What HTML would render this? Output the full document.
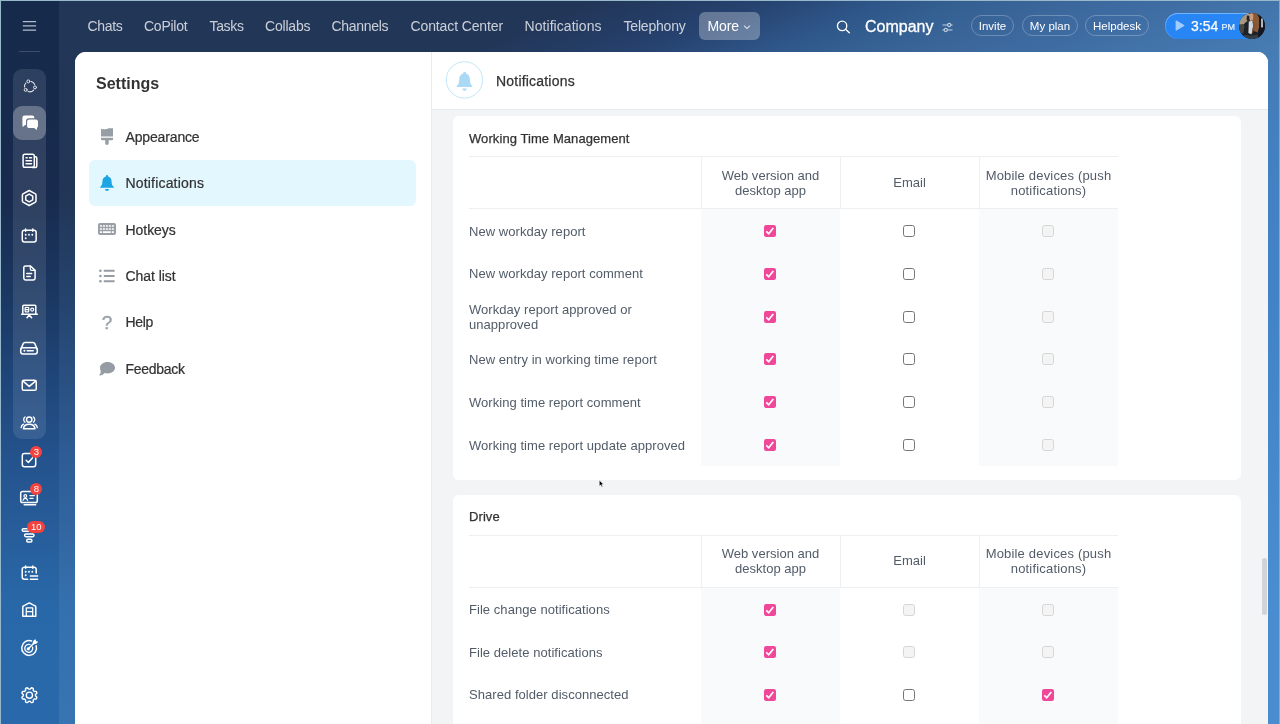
<!DOCTYPE html>
<html lang="en">
<head>
<meta charset="utf-8">
<title>Settings - Notifications</title>
<style>
*{box-sizing:border-box;margin:0;padding:0}
html,body{width:1280px;height:724px;overflow:hidden}
body{font-family:"Liberation Sans",sans-serif;position:relative;background:#2a62a2;color:#333}
.abs{position:absolute}
#bg{left:59px;top:0;width:1221px;height:724px;background:
 linear-gradient(180deg,#223658 0%,#213656 27%,#24446e 42%,#2a5082 52.500%,#2e5c94 63%,#3570ae 83.500%,#3874b2 100%)}
#bgr{left:59px;top:0;width:1221px;height:52px;background:linear-gradient(157.400deg,#223658 0%,#223658 40%,#26426f 52.500%,#2e5587 61%,#345f91 67%,#3a6599 73.300%,#3e6ca2 81.800%,#477db4 99.600%)}
#rail{left:0;top:0;width:59px;height:724px;background:
 linear-gradient(180deg,#162a4c 0%,#182b4e 27%,#1b3964 42%,#1f467a 52.500%,#24528c 63%,#2968a8 83.500%,#2968aa 100%)}
#edgeL{left:0;top:0;width:1px;height:724px;background:#98b8cc}
#edgeT{left:0;top:0;width:1280px;height:1px;background:#98b8cc}
#rstrip{left:1250px;top:52px;width:30px;height:672px;background:linear-gradient(180deg,#467cb4 0%,#4280c0 13%,#4283c8 36%,#4a8cd0 80%,#4a8cd0 100%)}
/* top nav */
.nav{top:17px;font-size:14px;line-height:18px;color:rgba(255,255,255,.76);white-space:nowrap}
#more{left:699px;top:12px;width:61px;height:28px;border-radius:6px;background:rgba(255,255,255,.29)}
.pill{top:15px;height:21px;border:1px solid rgba(255,255,255,.25);border-radius:11px;color:#fff;font-size:11.500px;line-height:20px;text-align:center;white-space:nowrap}
/* panel */
#panel{left:75px;top:52px;width:1193px;height:672px;background:#fff;border-radius:11px 11px 0 0;overflow:hidden;will-change:transform}
#side{left:0;top:0;width:357px;height:672px;background:#fff;border-right:1px solid #e9ecef;z-index:2}
#main{left:356px;top:0;width:837px;height:672px;background:#f2f4f6}
#mhead{left:0;top:0;width:837px;height:58px;background:#fff;border-bottom:1px solid #e6e9ec}
.mi{left:14px;width:327px;height:46px;border-radius:6px}
.mi span{position:absolute;left:36.500px;top:14px;font-size:14px;line-height:18px;color:#333;white-space:nowrap}
.card{left:22px;width:788px;background:#fff;border-radius:6px}
#mtitle{font-size:14px;line-height:18px;color:#333;white-space:nowrap;-webkit-text-stroke:.25px #333;letter-spacing:.2px}
.ctitle{font-size:13px;line-height:18px;color:#333;white-space:nowrap;-webkit-text-stroke:.25px #333;letter-spacing:.08px;margin-top:.6px}
.ln{background:#edeff1}
.th{font-size:13px;line-height:15px;color:#525c69;text-align:center;white-space:nowrap;letter-spacing:.02px;margin-top:0px}
.td{font-size:13px;line-height:15px;color:#525c69;white-space:nowrap;margin-top:.6px;letter-spacing:.05px}
.cbo{width:12px;height:12px;border:1px solid #767676;border-radius:2.500px;background:#fff}
.cbd{width:12px;height:12px;border:1px solid #d9d9d9;border-radius:2.500px;background:#f3f3f3}
.mi span{-webkit-text-stroke:.22px #333;letter-spacing:.05px}
.bdg{height:12px;border-radius:6px;background:#f4433e;color:#fff;font-size:9.500px;line-height:12px;text-align:center}
</style>
</head>
<body>
<div id="bg" class="abs"></div>
<div id="bgr" class="abs"></div>
<div id="rail" class="abs"></div>
<div id="rstrip" class="abs"></div>
<div id="edgeT" class="abs"></div>
<div id="edgeL" class="abs"></div>
<div class="abs" style="left:1279px;top:0;width:1px;height:724px;background:#7fabcf"></div>

<div id="top" class="abs" style="left:0;top:0;width:1280px;height:724px;will-change:transform">
<!-- TOPNAV -->
<div class="abs nav" style="left:87.500px;letter-spacing:-.3px">Chats</div>
<div class="abs nav" style="left:144px;letter-spacing:-.25px">CoPilot</div>
<div class="abs nav" style="left:209.500px;letter-spacing:-.35px">Tasks</div>
<div class="abs nav" style="left:265px;letter-spacing:-.2px">Collabs</div>
<div class="abs nav" style="left:331.500px;letter-spacing:-.3px">Channels</div>
<div class="abs nav" style="left:410.500px;letter-spacing:-.12px">Contact Center</div>
<div class="abs nav" style="left:524.500px;letter-spacing:.06px">Notifications</div>
<div class="abs nav" style="left:623.500px;letter-spacing:-.2px">Telephony</div>
<div id="more" class="abs"></div>
<div class="abs nav" style="left:707.500px;color:#fff;letter-spacing:-.1px">More</div>
<svg class="abs" style="left:743px;top:23px" width="8" height="8" viewBox="0 0 8 8"><path d="M1 2.600 4 5.400 7 2.600" fill="none" stroke="rgba(255,255,255,.75)" stroke-width="1.100"/></svg>
<svg class="abs" style="left:835.500px;top:19.500px" width="15" height="14" viewBox="0 0 16 15"><circle cx="6.500" cy="6.300" r="5" fill="none" stroke="#fff" stroke-width="1.400"/><path d="M10.200 10l4 3.700" stroke="#fff" stroke-width="1.500" stroke-linecap="round"/></svg>
<div class="abs" id="company" style="left:865px;top:16px;font-size:16px;line-height:22px;color:#fff;white-space:nowrap;-webkit-text-stroke:.3px #fff">Company</div>
<svg class="abs" style="left:942px;top:22px" width="11" height="11" viewBox="0 0 11 11"><g stroke="rgba(255,255,255,.7)" stroke-width="1.100" fill="none"><path d="M.5 3h4.800M9 3h1.500M.5 8h1.500M5.700 8h4.800"/><circle cx="7.200" cy="3" r="1.600"/><circle cx="3.800" cy="8" r="1.600"/></g></svg>
<div class="abs pill" style="left:971px;width:43px">Invite</div>
<div class="abs pill" style="left:1022px;width:56px">My plan</div>
<div class="abs pill" style="left:1085px;width:64px">Helpdesk</div>
<div class="abs" style="left:1164.500px;top:13px;width:88px;height:25.500px;border-radius:13px 0 0 13px;background:#2786f4;box-shadow:inset 0 1px 0 rgba(120,185,255,.9), inset 1px 0 0 rgba(120,185,255,.4)"></div>
<svg class="abs" style="left:1175px;top:20.300px" width="10" height="11" viewBox="0 0 10 11"><path d="M1.200 1 8.800 5.500 1.200 10z" fill="#a3cdff" stroke="#a3cdff" stroke-width="1.200" stroke-linejoin="round"/></svg>
<div class="abs" id="clock" style="left:1191px;top:16px;font-size:14px;line-height:20px;color:#fff;white-space:nowrap;-webkit-text-stroke:.25px #fff">3:54</div><div class="abs" id="pm" style="left:1221.500px;top:19px;-webkit-text-stroke:.2px rgba(255,255,255,.85);font-size:9px;line-height:16px;color:rgba(255,255,255,.85);white-space:nowrap">PM</div>
<svg class="abs" style="left:1239px;top:12.700px" width="26" height="26" viewBox="0 0 26 26"><defs><clipPath id="av"><circle cx="13" cy="13" r="13"/></clipPath><filter id="avb" x="-10%" y="-10%" width="120%" height="120%"><feGaussianBlur stdDeviation=".55"/></filter></defs><g clip-path="url(#av)"><rect width="26" height="26" fill="#1a2028"/><g filter="url(#avb)"><rect width="26" height="26" fill="#1a2028"/><path d="M0 0h10v7.500l-3 1.500-3.500 3.500H0z" fill="#a89a82"/><path d="M0 11.500l3.800-.5 1.800 2-1.400 8-4.200-2z" fill="#4a4640"/><path d="M12.500 0h5l2.700 5 .3 8-2 6.500-3.500-1.500-1.300-9-2.200-4z" fill="#8a5a35"/><path d="M9.800 1.500c1-1.800 3.800-1.500 4.500.5l-.2 4.500-2.400 1.800-2.100-2.300z" fill="#c89c82"/><path d="M8 2.500l2.300.3.300 4.500-1.800 1.200-1.300-2z" fill="#2a2320"/><path d="M9.800 8.500l3.600-.7.800 5.200-1.600 8.500-3.200-1.500z" fill="#d4d7dc"/><path d="M14 7.500c1.800 2 2.200 6.500 1.200 9.500l-2.600 4.500 1.600-8.500z" fill="#7d5030"/><path d="M20.500 2.500h5.500v23.500h-7l1-9z" fill="#121820"/><path d="M22.100 5.500h1.700l.2 8.700-1.900.3z" fill="#c5c9cf"/><path d="M5 21.500l7 1.200 7-1.200v4.500H5z" fill="#363c44"/></g></g></svg>

<svg class="abs" style="left:20px;top:16px" width="20" height="20" viewBox="0 0 20 20"><path d="M2.800 5.600h13.300M2.800 9.900h13.300M2.800 14.100h13.300" stroke="#b4bccb" stroke-width="1.400" fill="none"/></svg><div class="abs" style="left:19px;top:51px;width:21px;height:1px;background:rgba(255,255,255,.16)"></div>
<div class="abs" style="left:12.500px;top:68.500px;width:33.500px;height:370.500px;border-radius:9px;background:rgba(255,255,255,.10)"></div>
<div class="abs" style="left:12.500px;top:106px;width:33.500px;height:34px;border-radius:9px;background:rgba(255,255,255,.27)"></div>
<svg class="abs" style="left:17px;top:74px" width="24" height="24" viewBox="0 0 24 24"><g stroke="#fff" fill="none" stroke-linecap="round" opacity=".88"><path stroke-width="1.050" d="M14.35 7.43A5.3 5.3 0 0 1 17.68 10.43M16.68 16.11A5.3 5.3 0 0 1 11.16 17.54M7.53 13.05A5.3 5.3 0 0 1 8.80 9.02"/><circle cx="11.34" cy="7.41" r="1.500" stroke-width="1"/><circle cx="18.02" cy="13.42" r="1.500" stroke-width="1"/><circle cx="8.68" cy="15.84" r="1.500" stroke-width="1"/></g></svg>
<svg class="abs" style="left:17.600px;top:111px" width="24" height="24" viewBox="0 0 24 24"><path fill="#fff" d="M6.600 4.600h7.600a2.200 2.200 0 0 1 2.200 2.200v.5h-5.200a3.200 3.200 0 0 0-3.200 3.200v3.500h-.9l-2 1.700c-.3.200-.6 0-.6-.3v-1.700a2.200 2.200 0 0 1-.1-.7v-6.200a2.200 2.200 0 0 1 2.200-2.200z"/><path fill="#fff" d="M11.300 8.500h6.500a2.200 2.200 0 0 1 2.200 2.200v4.200a2.200 2.200 0 0 1-1 1.850v1.700c0 .3-.35.500-.6.300l-2.300-1.650h-4.800a2.200 2.200 0 0 1-2.200-2.200v-4.200a2.200 2.200 0 0 1 2.200-2.200z"/></svg>
<svg class="abs" style="left:17px;top:148.5px" width="24" height="24" viewBox="0 0 24 24"><g stroke="#fff" stroke-width="1.500" fill="none" stroke-linecap="round" stroke-linejoin="round"><rect x="6.100" y="5.250" width="11.200" height="13.100" rx="1.800"/><path d="M17.600 7.700h.7a1.500 1.500 0 0 1 1.500 1.500v7.700a1.500 1.500 0 0 1-1.500 1.500h-3"/><path d="M9 8.700h1.200M12.500 8.700h2M9 11.700h5.500M9 14.700h5.500" stroke-width="1.400"/></g></svg>
<svg class="abs" style="left:17px;top:186px" width="24" height="24" viewBox="0 0 24 24"><g stroke="#fff" stroke-width="1.500" fill="none" stroke-linecap="round" stroke-linejoin="round"><path d="M12.200 4.500l6.200 3.400a1.200 1.200 0 0 1 .6 1v6.200a1.200 1.200 0 0 1-.6 1l-6.200 3.400-6.200-3.400a1.200 1.200 0 0 1-.6-1V8.900a1.200 1.200 0 0 1 .6-1z"/><path d="M12.200 8.100l3.500 2v3.800l-3.500 2-3.500-2v-3.800z"/></g></svg>
<svg class="abs" style="left:17px;top:223.5px" width="24" height="24" viewBox="0 0 24 24"><g stroke="#fff" stroke-width="1.500" fill="none" stroke-linecap="round" stroke-linejoin="round"><rect x="5.250" y="6.200" width="13.900" height="11.700" rx="2.200"/><path d="M8.600 5v2.200M15.800 5v2.200"/><path stroke-width="1.900" d="M8.700 10.800h.01M12 10.800h.01M15.300 10.800h.01M8.700 14.200h.01"/></g></svg>
<svg class="abs" style="left:17px;top:261px" width="24" height="24" viewBox="0 0 24 24"><g stroke="#fff" stroke-width="1.500" fill="none" stroke-linecap="round" stroke-linejoin="round"><path d="M8.600 5h4.900l4.600 4.400v7.700a1.800 1.800 0 0 1-1.800 1.800H8.600a1.800 1.800 0 0 1-1.800-1.800V6.800a1.800 1.800 0 0 1 1.800-1.800z"/><path d="M13.300 5.200v2.900a1.300 1.300 0 0 0 1.300 1.300h3.200" stroke-width="1.200"/><path d="M9.800 12.600h4.800M9.800 15.500h3.400"/></g></svg>
<svg class="abs" style="left:17px;top:298.5px" width="24" height="24" viewBox="0 0 24 24"><g stroke="#fff" stroke-width="1.500" fill="none" stroke-linecap="round" stroke-linejoin="round"><path d="M5.800 15V7.300a1 1 0 0 1 1-1h11a1 1 0 0 1 1 1V15"/><path d="M4.700 15.300h15.600"/><path d="M10 18.700l2.300-2.700 2.300 2.700"/><rect x="8.200" y="8.300" width="3.500" height="4.600" rx=".5" stroke-width="1.200"/><path d="M8.200 10.600h3.500" stroke-width="1.200"/><circle cx="15.200" cy="10.600" r="1.500" stroke-width="1.200"/></g></svg>
<svg class="abs" style="left:17px;top:336px" width="24" height="24" viewBox="0 0 24 24"><g stroke="#fff" stroke-width="1.500" fill="none" stroke-linecap="round" stroke-linejoin="round"><path d="M3.800 13.200l2.400-5.600a2 2 0 0 1 1.800-1.200h8a2 2 0 0 1 1.800 1.200l2.400 5.600"/><rect x="3.700" y="11.700" width="16.600" height="6.200" rx="2.200"/><path d="M7.400 14.800h.01" stroke-width="2"/><path d="M10.200 14.800h6"/></g></svg>
<svg class="abs" style="left:17px;top:373px" width="24" height="24" viewBox="0 0 24 24"><g stroke="#fff" stroke-width="1.500" fill="none" stroke-linecap="round" stroke-linejoin="round"><rect x="5.250" y="7.150" width="14" height="10.100" rx="1.600"/><path d="M6 8.200l6.250 5.200 6.250-5.200"/></g></svg>
<svg class="abs" style="left:17px;top:410.5px" width="24" height="24" viewBox="0 0 24 24"><g stroke="#fff" stroke-width="1.500" fill="none" stroke-linecap="round" stroke-linejoin="round"><circle cx="12.200" cy="8.600" r="2.700"/><path d="M6.400 17.800c.3-2.900 2.600-4.500 5.800-4.500s5.500 1.600 5.800 4.500z"/><path d="M8 6a3.200 3.200 0 0 0 0 5.200M16.400 6a3.200 3.200 0 0 1 0 5.200" stroke-width="1.300"/><path d="M4.100 16.700c.2-1.600 1-2.800 2.500-3.500M20.300 16.700c-.2-1.600-1-2.800-2.500-3.500" stroke-width="1.300"/></g></svg>
<svg class="abs" style="left:17px;top:448px" width="24" height="24" viewBox="0 0 24 24"><g stroke="#fff" stroke-width="1.500" fill="none" stroke-linecap="round" stroke-linejoin="round"><rect x="5.300" y="5.400" width="13.400" height="13.400" rx="2.200"/><path d="M9.200 12.300l2.200 2.200 4-4.600"/></g></svg>
<svg class="abs" style="left:17px;top:485.5px" width="24" height="24" viewBox="0 0 24 24"><g stroke="#fff" stroke-width="1.500" fill="none" stroke-linecap="round" stroke-linejoin="round"><rect x="3.700" y="5.600" width="16.600" height="11" rx="1.800"/><path d="M7.200 18.700h11.400"/><circle cx="8.300" cy="10" r="1.400" stroke-width="1.200"/><path d="M6 14.300c.3-1.400 1.200-2 2.300-2s2 .6 2.300 2" stroke-width="1.200"/><path d="M13 9.600h4.300M13 12.400h3" stroke-width="1.300"/></g></svg>
<svg class="abs" style="left:17px;top:523px" width="24" height="24" viewBox="0 0 24 24"><g stroke="#fff" stroke-width="1.500" fill="none" stroke-linecap="round" stroke-linejoin="round"><rect x="5.200" y="5.750" width="14" height="2.600" rx="1.300"/><rect x="7.600" y="11.050" width="9.400" height="2.600" rx="1.300"/><rect x="9.700" y="16.350" width="5.200" height="2.600" rx="1.300"/></g></svg>
<svg class="abs" style="left:17px;top:560.5px" width="24" height="24" viewBox="0 0 24 24"><g stroke="#fff" stroke-width="1.500" fill="none" stroke-linecap="round" stroke-linejoin="round"><path d="M10.600 18.200H7.400a2.200 2.200 0 0 1-2.200-2.200V8.400a2.200 2.200 0 0 1 2.200-2.200h9.600a2.200 2.200 0 0 1 2.200 2.200v3.600"/><path d="M8.600 5v2.200M15.800 5v2.200"/><path stroke-width="1.900" d="M8.700 10.800h.01M12 10.800h.01M15.300 10.800h.01M8.700 14.200h.01"/><path d="M13.400 15.100h7.200M13.400 18.200h7.200"/></g></svg>
<svg class="abs" style="left:17px;top:598px" width="24" height="24" viewBox="0 0 24 24"><g stroke="#fff" stroke-width="1.500" fill="none" stroke-linecap="round" stroke-linejoin="round"><path d="M5.800 18.200V9.200a1.500 1.500 0 0 1 .9-1.400l5-2.600a1.400 1.400 0 0 1 1.200 0l5 2.600a1.500 1.500 0 0 1 .9 1.400v9z"/><path d="M9.300 18v-8.200h6.400V18M9.300 13.600h6.400" stroke-width="1.300"/></g></svg>
<svg class="abs" style="left:17px;top:635.5px" width="24" height="24" viewBox="0 0 24 24"><g stroke="#fff" stroke-width="1.500" fill="none" stroke-linecap="round" stroke-linejoin="round"><path d="M14.600 5a7.400 7.400 0 1 0 4.600 4.800"/><path d="M13 8.500a4 4 0 1 0 2.600 2.700" stroke-width="1.300"/><path d="M11.300 12.800l5.600-5.600"/><path d="M16.200 7.700l.4-2.300 1.600-1.600.3 1.800 1.800.3-1.600 1.600z" stroke-width="1.100" fill="#fff"/><circle cx="11.300" cy="12.800" r=".9" fill="#fff"/></g></svg>
<svg class="abs" style="left:17px;top:682.5px" width="24" height="24" viewBox="0 0 24 24"><g stroke="#fff" stroke-width="1.500" fill="none" stroke-linecap="round" stroke-linejoin="round"><path d="M18.50 12.20 18.49 12.60 18.53 13.01 19.22 13.56 19.85 14.20 19.79 14.71 19.61 15.18 19.40 15.65 19.08 16.06 18.18 16.06 17.31 15.97 16.99 16.22 16.71 16.51 16.42 16.79 16.17 17.11 16.26 17.98 16.26 18.88 15.85 19.20 15.38 19.41 14.91 19.59 14.40 19.65 13.76 19.02 13.21 18.33 12.80 18.29 12.40 18.30 12.00 18.29 11.59 18.33 11.04 19.02 10.40 19.65 9.89 19.59 9.42 19.41 8.95 19.20 8.54 18.88 8.54 17.98 8.63 17.11 8.38 16.79 8.09 16.51 7.81 16.22 7.49 15.97 6.62 16.06 5.72 16.06 5.40 15.65 5.19 15.18 5.01 14.71 4.95 14.20 5.58 13.56 6.27 13.01 6.31 12.60 6.30 12.20 6.31 11.80 6.27 11.39 5.58 10.84 4.95 10.20 5.01 9.69 5.19 9.22 5.40 8.75 5.72 8.34 6.62 8.34 7.49 8.43 7.81 8.18 8.09 7.89 8.38 7.61 8.63 7.29 8.54 6.42 8.54 5.52 8.95 5.20 9.42 4.99 9.89 4.81 10.40 4.75 11.04 5.38 11.59 6.07 12.00 6.11 12.40 6.10 12.80 6.11 13.21 6.07 13.76 5.38 14.40 4.75 14.91 4.81 15.38 4.99 15.85 5.20 16.26 5.52 16.26 6.42 16.17 7.29 16.42 7.61 16.71 7.89 16.99 8.18 17.31 8.43 18.18 8.34 19.08 8.34 19.40 8.75 19.61 9.22 19.79 9.69 19.85 10.20 19.22 10.84 18.53 11.39 18.49 11.80z" stroke-width="1.400"/><circle cx="12.4" cy="12.2" r="3.100" stroke-width="1.400"/></g></svg>
<div class="abs bdg" style="left:30.299999999999997px;top:446px;width:12px">3</div>
<div class="abs bdg" style="left:30.299999999999997px;top:483.3px;width:12px">8</div>
<div class="abs bdg" style="left:27.299999999999997px;top:521px;width:18px">10</div>

</div>
<!-- PANEL -->
<div id="panel" class="abs">
 <div id="side" class="abs">
<div class="abs" id="stitle" style="left:21px;top:22px;font-size:16px;line-height:20px;font-weight:bold;color:#333">Settings</div>
  <div class="abs mi" style="top:62px"><svg class="abs" style="left:12px;top:14px" width="12" height="17" viewBox="0 0 12 17"><path fill="#979ea6" d="M0 .9h1.300l.5.800.5-.8h1l.5.800.5-.8h2.200l.6-.7H12v8.400H0z M0 9.700h12v1.600c0 .6-.4.900-1 .9H7.700v3a1.750 1.750 0 0 1-3.500 0v-3H1c-.6 0-1-.3-1-.9z"/></svg><span style="letter-spacing:-0.15px">Appearance</span></div>
  <div class="abs mi" style="top:108px;background:#e2f7fe"><svg class="abs" style="left:11px;top:15px" width="14" height="16" viewBox="0 0 14 16"><path fill="#1ba5e3" d="M7 0a1.100 1.100 0 0 1 1.100 1.100v.5c2.200.6 3.500 2.500 3.500 4.900 0 2.700.6 4.100 2 5.200.5.400.3 1.100-.3 1.100H.700c-.6 0-.8-.7-.3-1.100 1.400-1.100 2-2.500 2-5.200 0-2.400 1.300-4.300 3.500-4.900v-.5A1.100 1.100 0 0 1 7 0z M5 14h4a2 2 0 0 1-4 0z"/></svg><span style="letter-spacing:0.18px">Notifications</span></div>
  <div class="abs mi" style="top:154.500px"><svg class="abs" style="left:9px;top:16.400px" width="18" height="12" viewBox="0 0 18 12"><rect width="18" height="12" rx="2" fill="#989fa7"/><g fill="#fff"><rect x="1.85" y="2.20" width="2.100" height="1.600" rx=".3"/><rect x="4.85" y="2.20" width="2.100" height="1.600" rx=".3"/><rect x="7.80" y="2.20" width="2.100" height="1.600" rx=".3"/><rect x="10.75" y="2.20" width="2.100" height="1.600" rx=".3"/><rect x="13.80" y="2.20" width="2.100" height="1.600" rx=".3"/><rect x="1.85" y="5.25" width="2.100" height="1.600" rx=".3"/><rect x="4.85" y="5.25" width="2.100" height="1.600" rx=".3"/><rect x="7.80" y="5.25" width="2.100" height="1.600" rx=".3"/><rect x="10.75" y="5.25" width="2.100" height="1.600" rx=".3"/><rect x="13.80" y="5.25" width="2.100" height="1.600" rx=".3"/><rect x="1.85" y="8.30" width="2.100" height="1.600" rx=".3"/><rect x="13.80" y="8.30" width="2.100" height="1.600" rx=".3"/><rect x="4.85" y="8.30" width="8.00" height="1.600" rx=".3"/></g></svg><span style="letter-spacing:-0.05px">Hotkeys</span></div>
  <div class="abs mi" style="top:201px"><svg class="abs" style="left:10px;top:16px" width="16" height="14" viewBox="0 0 16 14"><g fill="#959ca4"><circle cx="1.400" cy="1.800" r="1.300"/><circle cx="1.400" cy="7" r="1.300"/><circle cx="1.400" cy="12.200" r="1.300"/><rect x="4.600" y=".85" width="11.200" height="1.900" rx=".95"/><rect x="4.600" y="6.050" width="11.200" height="1.900" rx=".95"/><rect x="4.600" y="11.250" width="11.200" height="1.900" rx=".95"/></g></svg><span style="letter-spacing:-0.06px">Chat list</span></div>
  <div class="abs mi" style="top:247px"><div class="abs" style="left:12px;top:12px;width:12px;text-align:center;font-size:19px;line-height:24px;color:#9aa0a7;-webkit-text-stroke:.35px #9aa0a7">?</div><span style="letter-spacing:-0.3px">Help</span></div>
  <div class="abs mi" style="top:293.500px"><svg class="abs" style="left:10px;top:16px" width="16" height="14" viewBox="0 0 16 14"><path fill="#959ca4" d="M8.500 0C12.600 0 16 2.500 16 5.700s-3.400 5.700-7.500 5.700c-1.100 0-2.100-.2-3-.5-.9 1.200-2.600 2.300-4.700 2.700-.4.100-.6-.3-.4-.6.800-1.100 1.300-2.400 1.400-3.700C1.300 8.300 1 7 1 5.700 1 2.500 4.400 0 8.500 0z"/></svg><span style="letter-spacing:-0.29px">Feedback</span></div>
 </div>
 <div id="main" class="abs">
  <div id="mhead" class="abs"></div>
<svg class="abs" style="left:0;top:0" width="70" height="57" viewBox="0 0 70 57"><circle cx="33.400" cy="27.900" r="18.200" fill="#fff" stroke="#c3e6f8" stroke-width="1"/><path transform="translate(25.900,19.700) scale(1.280,1.330)" fill="#a9d9f5" d="M6 0a1 1 0 0 1 1 1v.4c2 .5 3.200 2.300 3.200 4.500 0 2.400.5 3.700 1.700 4.700.4.300.2.900-.3.900H.400c-.5 0-.7-.6-.3-.9 1.200-1 1.700-2.300 1.700-4.700 0-2.200 1.200-4 3.200-4.500V1a1 1 0 0 1 1-1z M4.300 12.600h3.400a1.700 1.700 0 0 1-3.400 0z"/></svg>
<div class="abs" id="mtitle" style="left:65px;top:20px">Notifications</div>
<div class="abs card" style="top:64px;height:364px">
<div class="abs ctitle" style="left:16px;top:13px">Working Time Management</div>
<div class="abs" style="left:248px;top:93px;width:139px;height:257px;background:#f8fafb"></div>
<div class="abs" style="left:526px;top:93px;width:139px;height:257px;background:#f8fafb"></div>
<div class="abs ln" style="left:16px;top:40px;width:649px;height:1px"></div>
<div class="abs ln" style="left:16px;top:92px;width:649px;height:1px"></div>
<div class="abs ln" style="left:248px;top:41px;width:1px;height:51px"></div>
<div class="abs ln" style="left:387px;top:41px;width:1px;height:51px"></div>
<div class="abs ln" style="left:526px;top:41px;width:1px;height:51px"></div>
<div class="abs th" style="left:248px;top:52px;width:139px">Web version and<br>desktop app</div>
<div class="abs th" style="left:387px;top:59px;width:139px">Email</div>
<div class="abs th" style="left:526px;top:52px;width:139px;letter-spacing:.18px">Mobile devices (push<br>notifications)</div>
<div class="abs td" style="left:16px;top:107.00px">New workday report</div>
<svg class="abs" style="left:311px;top:108.9px" width="12" height="12" viewBox="0 0 12 12"><rect width="12" height="12" rx="2.200" fill="#f0479b"/><path d="M2.300 6.400 4.700 8.800 9.300 2.900" fill="none" stroke="#fff" stroke-width="1.700"/></svg>
<svg class="abs" style="left:450px;top:108.9px" width="12" height="12" viewBox="0 0 12 12"><rect x=".5" y=".5" width="11" height="11" rx="2.200" fill="#fff" stroke="#767676"/></svg>
<svg class="abs" style="left:589px;top:108.9px" width="12" height="12" viewBox="0 0 12 12"><rect x=".5" y=".5" width="11" height="11" rx="2.200" fill="#f4f4f4" stroke="#d6d6d6"/></svg>
<div class="abs td" style="left:16px;top:149.75px">New workday report comment</div>
<svg class="abs" style="left:311px;top:151.9px" width="12" height="12" viewBox="0 0 12 12"><rect width="12" height="12" rx="2.200" fill="#f0479b"/><path d="M2.300 6.400 4.700 8.800 9.300 2.900" fill="none" stroke="#fff" stroke-width="1.700"/></svg>
<svg class="abs" style="left:450px;top:151.9px" width="12" height="12" viewBox="0 0 12 12"><rect x=".5" y=".5" width="11" height="11" rx="2.200" fill="#fff" stroke="#767676"/></svg>
<svg class="abs" style="left:589px;top:151.9px" width="12" height="12" viewBox="0 0 12 12"><rect x=".5" y=".5" width="11" height="11" rx="2.200" fill="#f4f4f4" stroke="#d6d6d6"/></svg>
<div class="abs td" style="left:16px;top:185.00px">Workday report approved or<br>unapproved</div>
<svg class="abs" style="left:311px;top:194.6px" width="12" height="12" viewBox="0 0 12 12"><rect width="12" height="12" rx="2.200" fill="#f0479b"/><path d="M2.300 6.400 4.700 8.800 9.300 2.900" fill="none" stroke="#fff" stroke-width="1.700"/></svg>
<svg class="abs" style="left:450px;top:194.6px" width="12" height="12" viewBox="0 0 12 12"><rect x=".5" y=".5" width="11" height="11" rx="2.200" fill="#fff" stroke="#767676"/></svg>
<svg class="abs" style="left:589px;top:194.6px" width="12" height="12" viewBox="0 0 12 12"><rect x=".5" y=".5" width="11" height="11" rx="2.200" fill="#f4f4f4" stroke="#d6d6d6"/></svg>
<div class="abs td" style="left:16px;top:235.25px">New entry in working time report</div>
<svg class="abs" style="left:311px;top:237.4px" width="12" height="12" viewBox="0 0 12 12"><rect width="12" height="12" rx="2.200" fill="#f0479b"/><path d="M2.300 6.400 4.700 8.800 9.300 2.900" fill="none" stroke="#fff" stroke-width="1.700"/></svg>
<svg class="abs" style="left:450px;top:237.4px" width="12" height="12" viewBox="0 0 12 12"><rect x=".5" y=".5" width="11" height="11" rx="2.200" fill="#fff" stroke="#767676"/></svg>
<svg class="abs" style="left:589px;top:237.4px" width="12" height="12" viewBox="0 0 12 12"><rect x=".5" y=".5" width="11" height="11" rx="2.200" fill="#f4f4f4" stroke="#d6d6d6"/></svg>
<div class="abs td" style="left:16px;top:278.00px">Working time report comment</div>
<svg class="abs" style="left:311px;top:280.3px" width="12" height="12" viewBox="0 0 12 12"><rect width="12" height="12" rx="2.200" fill="#f0479b"/><path d="M2.300 6.400 4.700 8.800 9.300 2.900" fill="none" stroke="#fff" stroke-width="1.700"/></svg>
<svg class="abs" style="left:450px;top:280.3px" width="12" height="12" viewBox="0 0 12 12"><rect x=".5" y=".5" width="11" height="11" rx="2.200" fill="#fff" stroke="#767676"/></svg>
<svg class="abs" style="left:589px;top:280.3px" width="12" height="12" viewBox="0 0 12 12"><rect x=".5" y=".5" width="11" height="11" rx="2.200" fill="#f4f4f4" stroke="#d6d6d6"/></svg>
<div class="abs td" style="left:16px;top:321.50px">Working time report update approved</div>
<svg class="abs" style="left:311px;top:323.4px" width="12" height="12" viewBox="0 0 12 12"><rect width="12" height="12" rx="2.200" fill="#f0479b"/><path d="M2.300 6.400 4.700 8.800 9.300 2.900" fill="none" stroke="#fff" stroke-width="1.700"/></svg>
<svg class="abs" style="left:450px;top:323.4px" width="12" height="12" viewBox="0 0 12 12"><rect x=".5" y=".5" width="11" height="11" rx="2.200" fill="#fff" stroke="#767676"/></svg>
<svg class="abs" style="left:589px;top:323.4px" width="12" height="12" viewBox="0 0 12 12"><rect x=".5" y=".5" width="11" height="11" rx="2.200" fill="#f4f4f4" stroke="#d6d6d6"/></svg>
</div>
<div class="abs card" style="top:443px;height:300px">
<div class="abs ctitle" style="left:16px;top:12.200px">Drive</div>
<div class="abs" style="left:248px;top:93px;width:139px;height:171px;background:#f8fafb"></div>
<div class="abs" style="left:526px;top:93px;width:139px;height:171px;background:#f8fafb"></div>
<div class="abs ln" style="left:16px;top:40px;width:649px;height:1px"></div>
<div class="abs ln" style="left:16px;top:92px;width:649px;height:1px"></div>
<div class="abs ln" style="left:248px;top:41px;width:1px;height:51px"></div>
<div class="abs ln" style="left:387px;top:41px;width:1px;height:51px"></div>
<div class="abs ln" style="left:526px;top:41px;width:1px;height:51px"></div>
<div class="abs th" style="left:248px;top:50.600px;width:139px">Web version and<br>desktop app</div>
<div class="abs th" style="left:387px;top:57.800px;width:139px">Email</div>
<div class="abs th" style="left:526px;top:50.600px;width:139px;letter-spacing:.18px">Mobile devices (push<br>notifications)</div>
<div class="abs td" style="left:16px;top:106.40px">File change notifications</div>
<svg class="abs" style="left:311px;top:108.5px" width="12" height="12" viewBox="0 0 12 12"><rect width="12" height="12" rx="2.200" fill="#f0479b"/><path d="M2.300 6.400 4.700 8.800 9.300 2.900" fill="none" stroke="#fff" stroke-width="1.700"/></svg>
<svg class="abs" style="left:450px;top:108.5px" width="12" height="12" viewBox="0 0 12 12"><rect x=".5" y=".5" width="11" height="11" rx="2.200" fill="#f4f4f4" stroke="#d6d6d6"/></svg>
<svg class="abs" style="left:589px;top:108.5px" width="12" height="12" viewBox="0 0 12 12"><rect x=".5" y=".5" width="11" height="11" rx="2.200" fill="#f4f4f4" stroke="#d6d6d6"/></svg>
<div class="abs td" style="left:16px;top:149.15px">File delete notifications</div>
<svg class="abs" style="left:311px;top:151.4px" width="12" height="12" viewBox="0 0 12 12"><rect width="12" height="12" rx="2.200" fill="#f0479b"/><path d="M2.300 6.400 4.700 8.800 9.300 2.900" fill="none" stroke="#fff" stroke-width="1.700"/></svg>
<svg class="abs" style="left:450px;top:151.4px" width="12" height="12" viewBox="0 0 12 12"><rect x=".5" y=".5" width="11" height="11" rx="2.200" fill="#f4f4f4" stroke="#d6d6d6"/></svg>
<svg class="abs" style="left:589px;top:151.4px" width="12" height="12" viewBox="0 0 12 12"><rect x=".5" y=".5" width="11" height="11" rx="2.200" fill="#f4f4f4" stroke="#d6d6d6"/></svg>
<div class="abs td" style="left:16px;top:191.90px">Shared folder disconnected</div>
<svg class="abs" style="left:311px;top:194px" width="12" height="12" viewBox="0 0 12 12"><rect width="12" height="12" rx="2.200" fill="#f0479b"/><path d="M2.300 6.400 4.700 8.800 9.300 2.900" fill="none" stroke="#fff" stroke-width="1.700"/></svg>
<svg class="abs" style="left:450px;top:194px" width="12" height="12" viewBox="0 0 12 12"><rect x=".5" y=".5" width="11" height="11" rx="2.200" fill="#fff" stroke="#767676"/></svg>
<svg class="abs" style="left:589px;top:194px" width="12" height="12" viewBox="0 0 12 12"><rect width="12" height="12" rx="2.200" fill="#f0479b"/><path d="M2.300 6.400 4.700 8.800 9.300 2.900" fill="none" stroke="#fff" stroke-width="1.700"/></svg>
<div class="abs td" style="left:16px;top:234.65px">Folder shared</div>
<svg class="abs" style="left:311px;top:236.8px" width="12" height="12" viewBox="0 0 12 12"><rect width="12" height="12" rx="2.200" fill="#f0479b"/><path d="M2.300 6.400 4.700 8.800 9.300 2.900" fill="none" stroke="#fff" stroke-width="1.700"/></svg>
<svg class="abs" style="left:450px;top:236.8px" width="12" height="12" viewBox="0 0 12 12"><rect x=".5" y=".5" width="11" height="11" rx="2.200" fill="#fff" stroke="#767676"/></svg>
<svg class="abs" style="left:589px;top:236.8px" width="12" height="12" viewBox="0 0 12 12"><rect width="12" height="12" rx="2.200" fill="#f0479b"/><path d="M2.300 6.400 4.700 8.800 9.300 2.900" fill="none" stroke="#fff" stroke-width="1.700"/></svg>
</div>
<div class="abs" style="left:831px;top:506px;width:5px;height:57px;border-radius:3px;background:#d0d3d7"></div>
 </div>
</div>
<svg class="abs" style="left:598px;top:479px" width="8" height="10" viewBox="0 0 8 10"><path d="M1.200 1v6.300l1.500-1.300 1.100 2.300 1.100-.5-1.100-2.200h2z" fill="#000" stroke="#fff" stroke-width=".7" stroke-linejoin="round"/></svg>
</body>
</html>
